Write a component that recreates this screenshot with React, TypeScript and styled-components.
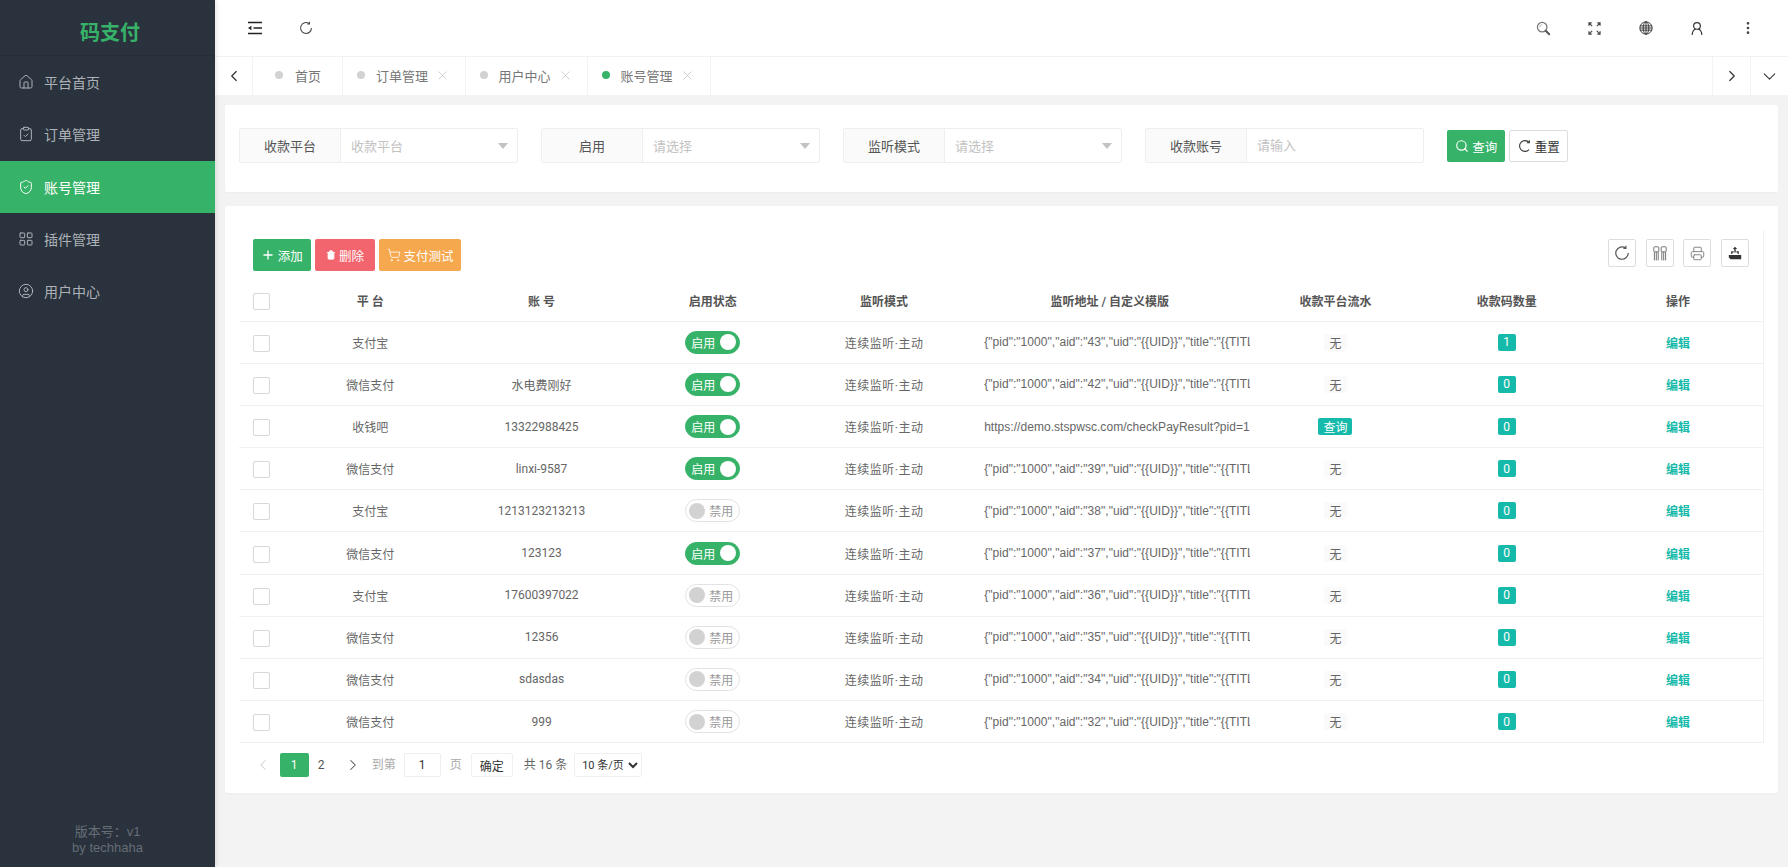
import React from 'react';
import styled, { createGlobalStyle } from 'styled-components';
import {
  ChevronDown,
  ChevronLeft,
  ChevronRight,
  CircleUser,
  ClipboardCheck,
  House,
  LayoutGrid,
  MoreVertical,
  Plus,
  Printer,
  Search,
  ShieldCheck,
  ShoppingCart,
  Trash,
  X,
} from 'lucide-react';

const GREEN = '#36b368';
const TEAL = '#16baaa';
const FONT = 'Roboto, "Noto Sans CJK SC", "Liberation Sans", sans-serif';

const GlobalStyle = createGlobalStyle`
  * { box-sizing: border-box; }
  html, body { margin: 0; padding: 0; height: 100%; }
  body { font-family: ${FONT}; background: #f3f3f3; overflow: hidden; }
`;

const Page = styled.div`
  display: flex;
  height: 100vh;
`;

/* sidebar */
const Sidebar = styled.aside`
  width: 215px;
  flex: none;
  display: flex;
  flex-direction: column;
  background: #29323d;
  box-shadow: 1px 0 5px rgba(0, 0, 0, 0.12);
  z-index: 2;
`;

const Logo = styled.div`
  height: 56px;
  display: flex;
  align-items: center;
  justify-content: center;
  padding: 7px 0 0 5px;
  font-size: 20px;
  font-weight: 700;
  color: ${GREEN};
  border-bottom: 1px solid #252d37;
`;

const NavItem = styled.div<{ $active?: boolean }>`
  height: 52.3px;
  display: flex;
  align-items: center;
  gap: 10px;
  padding-left: 18px;
  font-size: 14px;
  color: ${(p) => (p.$active ? '#fff' : '#aeb2b8')};
  background: ${(p) => (p.$active ? GREEN : 'transparent')};
`;

const SideFoot = styled.div`
  margin-top: auto;
  padding-bottom: 11px;
  text-align: center;
  font-size: 13px;
  line-height: 16px;
  color: #666d76;
  font-family: 'Liberation Sans', 'Noto Sans CJK SC', sans-serif;
`;

/* top area */
const Main = styled.main`
  flex: 1;
  min-width: 0;
  display: flex;
  flex-direction: column;
`;

const Header = styled.header`
  height: 57px;
  flex: none;
  display: flex;
  justify-content: space-between;
  padding: 0 14px;
  background: #fff;
  border-bottom: 1px solid #f1f1f1;
`;

const IconGroup = styled.div`
  display: flex;
  align-items: center;
`;

const HeadIcon = styled.div`
  width: 51.3px;
  height: 55px;
  display: flex;
  align-items: center;
  justify-content: center;
  color: #444;
`;

const TabBar = styled.nav`
  height: 38px;
  flex: none;
  display: flex;
  background: #fff;
`;

const TabArrow = styled.div<{ $left?: boolean }>`
  width: 38px;
  display: flex;
  align-items: center;
  justify-content: center;
  color: #333;
  border-left: ${(p) => (p.$left ? 'none' : '1px solid #f3f3f3')};
  border-right: ${(p) => (p.$left ? '1px solid #f3f3f3' : 'none')};
`;

const Tab = styled.div<{ $width: number; $plain?: boolean }>`
  width: ${(p) => p.$width}px;
  display: flex;
  align-items: center;
  padding-left: ${(p) => (p.$plain ? 22 : 14)}px;
  padding-bottom: 2px;
  font-size: 13px;
  color: #777;
  border-right: 1px solid #f3f3f3;
`;

const TabDot = styled.i<{ $active?: boolean; $plain?: boolean }>`
  width: 8px;
  height: 8px;
  border-radius: 50%;
  margin-right: ${(p) => (p.$plain ? 12 : 11)}px;
  background: ${(p) => (p.$active ? GREEN : '#d2d2d2')};
`;

const TabClose = styled(X)`
  margin-left: 7px;
  color: #bdbdbd;
`;

const TabSpacer = styled.div`
  flex: 1;
`;

const Content = styled.div`
  flex: 1;
  padding: 10px 10px 0 9.6px;
  display: flex;
  flex-direction: column;
  gap: 14px;
`;

const Panel = styled.section`
  background: #fff;
  border-radius: 2px;
  box-shadow: 0 1px 2px rgba(0, 0, 0, 0.03);
`;

/* filter form */
const FilterRow = styled.div`
  height: 87px;
  display: flex;
  align-items: flex-start;
  gap: 23.4px;
  padding: 23px 14.4px 0;
`;

const FormItem = styled.div`
  width: 278.6px;
  height: 35px;
  display: flex;
  border: 1px solid #eee;
  border-radius: 2px;
  font-size: 13px;
`;

const FormLabel = styled.label`
  width: 101px;
  display: flex;
  align-items: center;
  justify-content: center;
  color: #555;
  background: #fafafa;
  border-right: 1px solid #eee;
`;

const FormField = styled.div`
  flex: 1;
  display: flex;
  align-items: center;
  justify-content: space-between;
  padding: 0 9px 0 10px;
  color: #c2c2c2;
`;

const FormInput = styled.input`
  flex: 1;
  min-width: 0;
  border: 0;
  outline: 0;
  padding: 0 10px;
  font: inherit;
  &::placeholder {
    color: #c2c2c2;
  }
`;

const Caret = styled.i`
  border-style: solid;
  border-width: 6px 5px 0;
  border-color: #c2c2c2 transparent transparent;
`;

const FormButtons = styled.div`
  display: flex;
  gap: 4px;
  margin-top: 2px;
`;

const Button = styled.button<{ $bg?: string; $width: number }>`
  width: ${(p) => p.$width}px;
  height: 32px;
  display: flex;
  align-items: center;
  justify-content: center;
  gap: 3px;
  padding: 0;
  font-family: ${FONT};
  font-size: 12.5px;
  color: ${(p) => (p.$bg ? '#fff' : '#333')};
  background: ${(p) => p.$bg || '#fff'};
  border: ${(p) => (p.$bg ? '0' : '1px solid #ddd')};
  border-radius: 2px;
`;

/* table */
const TableBox = styled.div`
  margin: 24px 14px 0 14.4px;
  border-right: 1px solid #f1f1f1;
`;

const Toolbar = styled.div`
  height: 49.5px;
  display: flex;
  justify-content: space-between;
  padding: 9px 14px 0 13.6px;
`;

const ToolGroup = styled.div<{ $gap: number }>`
  display: flex;
  align-items: flex-start;
  gap: ${(p) => p.$gap}px;
`;

const ToolIcon = styled.div`
  width: 28px;
  height: 28px;
  display: flex;
  align-items: center;
  justify-content: center;
  color: #555;
  border: 1px solid #ddd;
  border-radius: 2px;
`;

const Row = styled.div<{ $head?: boolean }>`
  height: 42.17px;
  display: grid;
  grid-template-columns: 45.6px repeat(4, 171.3px) 280px repeat(3, 171.3px);
  align-items: center;
  font-size: 12px;
  color: ${(p) => (p.$head ? '#555' : '#666')};
  font-weight: ${(p) => (p.$head ? 600 : 400)};
  border-bottom: 1px solid #f1f1f1;
`;

const Cell = styled.div`
  display: flex;
  justify-content: center;
  align-items: center;
  min-width: 0;
`;

const ModeCell = styled(Cell)`
  letter-spacing: 0.5px;
`;

const UrlCell = styled.div`
  padding-left: 14.4px;
  overflow: hidden;
  white-space: nowrap;
  letter-spacing: 0.04px;
  font-family: 'Liberation Sans', sans-serif;
`;

const CheckBox = styled.span`
  width: 17px;
  height: 17px;
  margin-top: 2px;
  background: #fff;
  border: 1px solid #d8d8d8;
  border-radius: 2px;
`;

const Switch = styled.span<{ $on?: boolean }>`
  width: 55px;
  height: 23px;
  display: flex;
  flex-direction: ${(p) => (p.$on ? 'row' : 'row-reverse')};
  align-items: center;
  justify-content: space-between;
  padding: ${(p) => (p.$on ? '0 3px 0 5px' : '0 6px 0 3px')};
  border-radius: 12px;
  font-size: 12px;
  color: ${(p) => (p.$on ? '#fff' : '#999')};
  background: ${(p) => (p.$on ? GREEN : '#fff')};
  border: 1px solid ${(p) => (p.$on ? GREEN : '#e2e2e2')};
`;

const Knob = styled.i<{ $on?: boolean }>`
  width: 16px;
  height: 16px;
  border-radius: 50%;
  background: ${(p) => (p.$on ? '#fff' : '#d2d2d2')};
`;

const Tag = styled.span<{ $width: number; $color?: string }>`
  width: ${(p) => p.$width}px;
  height: 17px;
  display: flex;
  align-items: center;
  justify-content: center;
  border-radius: 2px;
  font-size: 12px;
  color: ${(p) => (p.$color ? '#fff' : '#666')};
  background: ${(p) => p.$color || '#fafafa'};
`;

const EditLink = styled.a`
  color: ${TEAL};
  font-weight: 600;
`;

/* pager */
const Pager = styled.div`
  height: 49.6px;
  display: flex;
  align-items: flex-start;
  padding: 10px 0 0 22.4px;
  font-size: 12px;
  color: #666;
`;

const PageBtn = styled.div<{ $width: number; $active?: boolean; $muted?: boolean }>`
  width: ${(p) => p.$width}px;
  height: 24px;
  display: flex;
  align-items: center;
  justify-content: center;
  border-radius: 2px;
  color: ${(p) => (p.$active ? '#fff' : p.$muted ? '#c2c2c2' : '#555')};
  background: ${(p) => (p.$active ? GREEN : 'transparent')};
`;

const PagerText = styled.span<{ $right: number; $muted?: boolean }>`
  height: 24px;
  line-height: 24px;
  margin-right: ${(p) => p.$right}px;
  color: ${(p) => (p.$muted ? '#aaa' : '#666')};
`;

const PageInput = styled.input`
  width: 37px;
  height: 24px;
  margin-right: 9px;
  padding: 0;
  text-align: center;
  font: inherit;
  color: #333;
  border: 1px solid #eee;
  border-radius: 2px;
  outline: 0;
`;

const PageGo = styled.button`
  width: 42px;
  height: 24px;
  margin-right: 11px;
  padding: 0;
  font: inherit;
  color: #333;
  background: #fff;
  border: 1px solid #f0f0f0;
  border-radius: 2px;
`;

const PageSize = styled.select`
  width: 68px;
  height: 24px;
  padding: 0 0 0 3px;
  font-family: ${FONT};
  font-size: 11px;
  color: #333;
  background: #fff;
  border: 1px solid #f0f0f0;
  border-radius: 2px;
  outline: 0;
`;

const MenuIcon = () => (
  <svg width="16" height="14" viewBox="0 0 16 14" fill="none" stroke="#222" strokeWidth="1.7">
    <path d="M1 1.5H15M6.5 7H15M1 12.5H15" />
    <path d="M4.4 4.8V9.2L1 7Z" fill="#222" stroke="none" />
  </svg>
);

const RefreshIcon = ({ size = 16 }: { size?: number }) => (
  <svg width={size} height={size} viewBox="0 0 16 16" fill="none" stroke="currentColor" strokeWidth="1.2">
    <path d="M11.6 3A6.2 6.2 0 1 0 14.2 8" />
    <path d="M11.9 0.8V3.4H9.4" />
  </svg>
);

const ResetIcon = () => (
  <svg width="14" height="14" viewBox="0 0 14 14" fill="none" stroke="currentColor" strokeWidth="1.1">
    <path d="M11 3.4A5.4 5.4 0 1 0 11 10.6" />
    <path d="M11.3 1.2V3.7H8.9" />
  </svg>
);

const SearchHeavy = () => (
  <svg width="15" height="15" viewBox="0 0 17 17" fill="none">
    <circle cx="7" cy="7" r="5.4" stroke="#777" strokeWidth="1.4" />
    <path d="M4.3 7A2.7 2.7 0 0 1 7 4.3" stroke="#aaa" />
    <path d="M11 11L15 15" stroke="#555" strokeWidth="2.2" strokeLinecap="round" />
  </svg>
);

const FullIcon = () => (
  <svg width="13" height="13" viewBox="0 0 14 14" fill="none" stroke="#444" strokeWidth="1.2">
    <path d="M1 4V1H4M1 1L4.5 4.5" />
    <path d="M13 4V1H10M13 1L9.5 4.5" />
    <path d="M1 10V13H4M1 13L4.5 9.5" />
    <path d="M13 10V13H10M13 13L9.5 9.5" />
  </svg>
);

const GlobeIcon = () => (
  <svg width="14" height="14" viewBox="0 0 15 15" fill="none" stroke="#333" strokeWidth="1">
    <circle cx="7.5" cy="7.5" r="6.6" />
    <ellipse cx="7.5" cy="7.5" rx="3" ry="6.6" />
    <path d="M7.5 1V14M1 5.2H14M1 7.5H14M1 9.8H14" />
  </svg>
);

const PersonIcon = () => (
  <svg width="12" height="15" viewBox="0 0 14 16" fill="none" stroke="#333" strokeWidth="1.4">
    <circle cx="7" cy="5" r="3.9" />
    <path d="M1.3 15.4C1.6 11.8 3.6 9.2 5.4 8.6M12.7 15.4C12.4 11.8 10.4 9.2 8.6 8.6" />
  </svg>
);

const ColsIcon = () => (
  <svg width="14" height="15" viewBox="0 0 14 15" fill="none" stroke="#666" strokeWidth="0.9">
    <rect x="0.8" y="0.8" width="5" height="5" rx="0.8" />
    <rect x="8.2" y="0.8" width="5" height="5" rx="0.8" />
    <path d="M1.4 6V14.4M3.3 6V14.4M5.2 6V14.4M8.8 6V14.4M10.7 6V14.4M12.6 6V14.4" />
  </svg>
);

const ExportIcon = () => (
  <svg width="14" height="14" viewBox="0 0 14 14" fill="#333">
    <path d="M0.8 9H13.2V13.2H2.6L0.8 11.4Z" />
    <path d="M3.2 8V5.2H5.6V6.4H4.4V8H9.6V6.4H8.4V5.2H10.8V8Z" />
    <path d="M6.3 6.4V3H4.8L7 0.7L9.2 3H7.7V6.4Z" />
  </svg>
);

interface Account {
  platform: string;
  account: string;
  on: boolean;
  url: string;
  query?: boolean;
  count: number;
}

const tpl = (aid: number) => `{"pid":"1000","aid":"${aid}","uid":"{{UID}}","title":"{{TITLE`;

const accounts: Account[] = [
  { platform: '支付宝', account: '', on: true, url: tpl(43), count: 1 },
  { platform: '微信支付', account: '水电费刚好', on: true, url: tpl(42), count: 0 },
  { platform: '收钱吧', account: '13322988425', on: true, url: 'https://demo.stspwsc.com/checkPayResult?pid=1', query: true, count: 0 },
  { platform: '微信支付', account: 'linxi-9587', on: true, url: tpl(39), count: 0 },
  { platform: '支付宝', account: '1213123213213', on: false, url: tpl(38), count: 0 },
  { platform: '微信支付', account: '123123', on: true, url: tpl(37), count: 0 },
  { platform: '支付宝', account: '17600397022', on: false, url: tpl(36), count: 0 },
  { platform: '微信支付', account: '12356', on: false, url: tpl(35), count: 0 },
  { platform: '微信支付', account: 'sdasdas', on: false, url: tpl(34), count: 0 },
  { platform: '微信支付', account: '999', on: false, url: tpl(32), count: 0 },
];

const navItems = [
  { label: '平台首页', icon: House },
  { label: '订单管理', icon: ClipboardCheck },
  { label: '账号管理', icon: ShieldCheck, active: true },
  { label: '插件管理', icon: LayoutGrid },
  { label: '用户中心', icon: CircleUser },
];

const filters = [
  { label: '收款平台', hint: '收款平台' },
  { label: '启用', hint: '请选择' },
  { label: '监听模式', hint: '请选择' },
];

const tabs = [
  { label: '订单管理', width: 122.5 },
  { label: '用户中心', width: 122 },
];

const App = () => {
  return (
    <Page>
      <GlobalStyle />
      <Sidebar>
        <Logo>码支付</Logo>
        {navItems.map((item) => (
          <NavItem key={item.label} $active={item.active}>
            <item.icon size={16} strokeWidth={1.5} />
            {item.label}
          </NavItem>
        ))}
        <SideFoot>
          <div>版本号：v1</div>
          <div>by techhaha</div>
        </SideFoot>
      </Sidebar>

      <Main>
        <Header>
          <IconGroup>
            <HeadIcon>
              <MenuIcon />
            </HeadIcon>
            <HeadIcon>
              <RefreshIcon size={14} />
            </HeadIcon>
          </IconGroup>
          <IconGroup>
            <HeadIcon>
              <SearchHeavy />
            </HeadIcon>
            <HeadIcon>
              <FullIcon />
            </HeadIcon>
            <HeadIcon>
              <GlobeIcon />
            </HeadIcon>
            <HeadIcon>
              <PersonIcon />
            </HeadIcon>
            <HeadIcon>
              <MoreVertical size={16} strokeWidth={2} />
            </HeadIcon>
          </IconGroup>
        </Header>

        <TabBar>
          <TabArrow $left>
            <ChevronLeft size={18} strokeWidth={1.6} />
          </TabArrow>
          <Tab $width={90} $plain>
            <TabDot $plain />
            首页
          </Tab>
          {tabs.map((tab) => (
            <Tab key={tab.label} $width={tab.width}>
              <TabDot />
              {tab.label}
              <TabClose size={15} strokeWidth={1.1} />
            </Tab>
          ))}
          <Tab $width={123}>
            <TabDot $active />
            账号管理
            <TabClose size={15} strokeWidth={1.1} />
          </Tab>
          <TabSpacer />
          <TabArrow>
            <ChevronRight size={18} strokeWidth={1.6} />
          </TabArrow>
          <TabArrow>
            <ChevronDown size={21} strokeWidth={1.2} />
          </TabArrow>
        </TabBar>

        <Content>
          <Panel>
            <FilterRow>
              {filters.map((f) => (
                <FormItem key={f.label}>
                  <FormLabel>{f.label}</FormLabel>
                  <FormField>
                    {f.hint}
                    <Caret />
                  </FormField>
                </FormItem>
              ))}
              <FormItem>
                <FormLabel>收款账号</FormLabel>
                <FormInput placeholder="请输入" />
              </FormItem>
              <FormButtons>
                <Button $bg={GREEN} $width={58.5}>
                  <Search size={14} strokeWidth={2} />
                  查询
                </Button>
                <Button $width={58.5}>
                  <ResetIcon />
                  重置
                </Button>
              </FormButtons>
            </FilterRow>
          </Panel>

          <Panel>
            <TableBox>
              <Toolbar>
                <ToolGroup $gap={4}>
                  <Button $bg={GREEN} $width={58.5}>
                    <Plus size={14} strokeWidth={2.2} />
                    添加
                  </Button>
                  <Button $bg="#f2656e" $width={60}>
                    <Trash size={10} fill="#fff" />
                    删除
                  </Button>
                  <Button $bg="#f6a84f" $width={82}>
                    <ShoppingCart size={14} strokeWidth={1.4} />
                    支付测试
                  </Button>
                </ToolGroup>
                <ToolGroup $gap={9.6}>
                  <ToolIcon>
                    <RefreshIcon />
                  </ToolIcon>
                  <ToolIcon>
                    <ColsIcon />
                  </ToolIcon>
                  <ToolIcon>
                    <Printer size={15} strokeWidth={1.4} color="#777" />
                  </ToolIcon>
                  <ToolIcon>
                    <ExportIcon />
                  </ToolIcon>
                </ToolGroup>
              </Toolbar>

              <Row $head>
                <Cell>
                  <CheckBox />
                </Cell>
                <Cell>平 台</Cell>
                <Cell>账 号</Cell>
                <Cell>启用状态</Cell>
                <Cell>监听模式</Cell>
                <Cell>监听地址 / 自定义模版</Cell>
                <Cell>收款平台流水</Cell>
                <Cell>收款码数量</Cell>
                <Cell>操作</Cell>
              </Row>

              {accounts.map((a) => (
                <Row key={a.url}>
                  <Cell>
                    <CheckBox />
                  </Cell>
                  <Cell>{a.platform}</Cell>
                  <Cell>{a.account}</Cell>
                  <Cell>
                    <Switch $on={a.on}>
                      {a.on ? '启用' : '禁用'}
                      <Knob $on={a.on} />
                    </Switch>
                  </Cell>
                  <ModeCell>连续监听·主动</ModeCell>
                  <UrlCell>{a.url}</UrlCell>
                  <Cell>
                    {a.query ? (
                      <Tag $width={34} $color={TEAL}>
                        查询
                      </Tag>
                    ) : (
                      <Tag $width={23}>无</Tag>
                    )}
                  </Cell>
                  <Cell>
                    <Tag $width={18} $color={TEAL}>
                      {a.count}
                    </Tag>
                  </Cell>
                  <Cell>
                    <EditLink>编辑</EditLink>
                  </Cell>
                </Row>
              ))}
            </TableBox>

            <Pager>
              <PageBtn $width={32.7} $muted>
                <ChevronLeft size={18} strokeWidth={1.2} />
              </PageBtn>
              <PageBtn $width={29} $active>
                1
              </PageBtn>
              <PageBtn $width={25}>2</PageBtn>
              <PageBtn $width={38}>
                <ChevronRight size={18} strokeWidth={1.4} />
              </PageBtn>
              <PagerText $right={8} $muted>
                到第
              </PagerText>
              <PageInput defaultValue="1" />
              <PagerText $right={9} $muted>
                页
              </PagerText>
              <PageGo>确定</PageGo>
              <PagerText $right={7}>共 16 条</PagerText>
              <PageSize defaultValue="10">
                <option value="10">10 条/页</option>
                <option value="20">20 条/页</option>
              </PageSize>
            </Pager>
          </Panel>
        </Content>
      </Main>
    </Page>
  );
};

export default App;
